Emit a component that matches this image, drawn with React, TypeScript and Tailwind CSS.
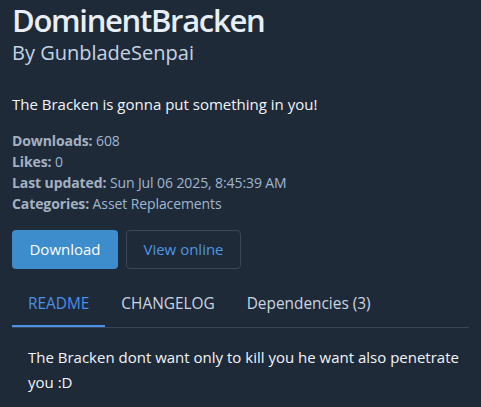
import React from "react";

const meta = [
  { label: "Downloads:", value: "608" },
  { label: "Likes:", value: "0" },
  { label: "Last updated:", value: "Sun Jul 06 2025, 8:45:39 AM" },
  { label: "Categories:", value: "Asset Replacements" },
];

const tabs = ["README", "CHANGELOG", "Dependencies (3)"];

export default function App() {
  return (
    <div className="min-h-screen bg-[#1f2a38] text-[#e6edf5] font-['Open_Sans',sans-serif] pl-3 pr-3 overflow-hidden">
      <h1 className="text-[31px] leading-[41px] font-semibold text-[#e8eef6] tracking-[-1.3px]">DominentBracken</h1>
      <h2 className="text-[20px] leading-[24px] text-[#c4d3e4]">By GunbladeSenpai</h2>

      <p className="text-[15px] leading-[22px] mt-[28px] text-[#f2f5f9]">The Bracken is gonna put something in you!</p>

      <div className="mt-[15px] text-[14px] leading-[21px] tracking-[-0.1px]">
        {meta.map((m) => (
          <div key={m.label}>
            <span className="font-bold text-[#a3b1c2]">{m.label}</span>{" "}
            <span className="text-[#9fb6cf]">{m.value}</span>
          </div>
        ))}
      </div>

      {/* actions */}
      <div className="flex gap-2 mt-[16px]">
        <button className="h-[39px] w-[106px] rounded bg-[#3d8ccc] text-white text-[15px]">Download</button>
        <button className="h-[39px] w-[115px] rounded border border-[#3b4757] text-[#4c96e0] text-[15px]">
          View online
        </button>
      </div>

      {/* tabs */}
      <div className="flex mt-[20px] border-b border-[#3a4655]">
        {tabs.map((t, i) => (
          <div
            key={t}
            className={`px-4 h-[38px] flex items-start pt-[3px] text-[15.4px] ${
              i === 0 ? "text-[#4a8fe8] border-b-2 border-[#4a8fe8] -mb-px" : "text-[#c9d5e2]"
            }`}
          >
            {t}
          </div>
        ))}
      </div>

      <div className="pl-4 pt-[17px] text-[15px] leading-[25px] text-[#f2f5f9]">
        The Bracken dont want only to kill you he want also penetrate you :D
      </div>
    </div>
  );
}
